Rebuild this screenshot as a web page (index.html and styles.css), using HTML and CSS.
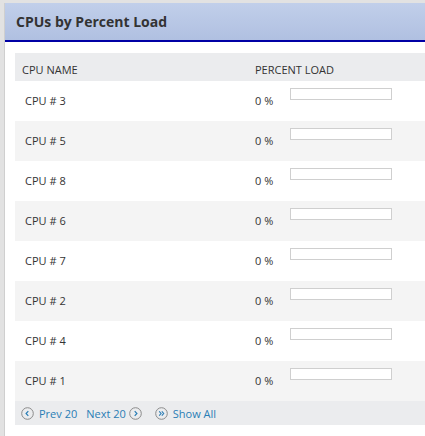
FILE: index.html
```html
<!DOCTYPE html>
<html>
<head>
<meta charset="utf-8">
<link rel="stylesheet" href="styles.css">
</head>
<body>
<div class="panel">
  <div class="panel-head">CPUs by Percent Load</div>
  <div class="panel-body">
    <div class="table">
      <div class="row head">
        <div class="c1">CPU NAME</div>
        <div class="c2">PERCENT LOAD</div>
      </div>
      <div class="row"><div class="c1">CPU # 3</div><div class="c2"><span class="pct">0 %</span><span class="bar"></span></div></div>
      <div class="row alt"><div class="c1">CPU # 5</div><div class="c2"><span class="pct">0 %</span><span class="bar"></span></div></div>
      <div class="row"><div class="c1">CPU # 8</div><div class="c2"><span class="pct">0 %</span><span class="bar"></span></div></div>
      <div class="row alt"><div class="c1">CPU # 6</div><div class="c2"><span class="pct">0 %</span><span class="bar"></span></div></div>
      <div class="row"><div class="c1">CPU # 7</div><div class="c2"><span class="pct">0 %</span><span class="bar"></span></div></div>
      <div class="row alt"><div class="c1">CPU # 2</div><div class="c2"><span class="pct">0 %</span><span class="bar"></span></div></div>
      <div class="row"><div class="c1">CPU # 4</div><div class="c2"><span class="pct">0 %</span><span class="bar"></span></div></div>
      <div class="row alt"><div class="c1">CPU # 1</div><div class="c2"><span class="pct">0 %</span><span class="bar"></span></div></div>
      <div class="foot">
        <a class="nav"><svg class="ic" viewBox="0 0 13 13" width="13" height="13"><circle cx="6.5" cy="6.5" r="5.8" fill="none" stroke="#8a8a8a" stroke-width="1"/><path d="M7.3 4.2 L5.1 6.5 L7.3 8.8" fill="none" stroke="#2a7db5" stroke-width="1.2"/></svg>Prev 20</a>
        <a class="nav next">Next 20<svg class="ic" viewBox="0 0 13 13" width="13" height="13"><circle cx="6.5" cy="6.5" r="5.8" fill="none" stroke="#8a8a8a" stroke-width="1"/><path d="M5.7 4.2 L7.9 6.5 L5.7 8.8" fill="none" stroke="#2a7db5" stroke-width="1.2"/></svg></a>
        <a class="nav all"><svg class="ic" viewBox="0 0 13 13" width="13" height="13"><circle cx="6.5" cy="6.5" r="5.8" fill="none" stroke="#8a8a8a" stroke-width="1"/><path d="M4.2 4.4 L6.1 6.5 L4.2 8.6 M6.8 4.4 L8.7 6.5 L6.8 8.6" fill="none" stroke="#2a7db5" stroke-width="1.1"/></svg>Show All</a>
      </div>
    </div>
  </div>
</div>
</body>
</html>
```

FILE: styles.css
```css
html, body {
  margin: 0;
  padding: 0;
}
body {
  background: #e2e2e2;
  padding: 3px 0 0 4px;
  font-family: "Open Sans", "Noto Sans", sans-serif;
  color: #333;
  overflow: hidden;
  height: 436px;
  box-sizing: border-box;
}
.panel {
  background: #fff;
  border-left: 1px solid #cfcfcf;
  height: 100%;
}
.panel-head {
  height: 39px;
  box-sizing: border-box;
  padding: 9px 0 0 11px;
  font-size: 14px;
  font-weight: 700;
  line-height: 20px;
  color: #333;
  background: linear-gradient(#c1cfea, #b0c0e1);
  border-bottom: 2px solid #0000a5;
}
.panel-body {
  padding: 11px 0 0 10px;
}
.table {
  width: 420px;
}
.row {
  display: flex;
  height: 40px;
  background: #fff;
}
.row.alt {
  background: #f4f4f4;
}
.row.head {
  height: 28px;
  background: #ebecee;
  font-size: 9px;
  line-height: 14px;
  color: #333;
}
.row.head .c1 {
  padding: 9px 0 0 7px;
  width: 233px;
}
.row.head .c2 {
  padding: 9px 0 0 0;
}
.c1 {
  width: 230px;
  padding: 12px 0 0 10px;
  font-size: 11px;
  line-height: 15px;
  box-sizing: content-box;
}
.c2 {
  display: flex;
  align-items: flex-start;
  font-size: 11px;
  line-height: 15px;
}
.pct {
  width: 35px;
  padding-top: 12px;
}
.bar {
  display: block;
  width: 100px;
  height: 10px;
  margin-top: 7px;
  border: 1px solid #cfcfcf;
  background: #fff;
}
.foot {
  height: 24px;
  background: #ebecee;
  display: flex;
  align-items: center;
  padding-left: 6px;
  font-size: 11px;
  color: #2a7db5;
}
.nav {
  display: flex;
  align-items: center;
  gap: 5px;
  margin-right: 9px;
}
.nav.next {
  gap: 3px;
  margin-right: 13px;
}
.ic {
  display: block;
}
```
